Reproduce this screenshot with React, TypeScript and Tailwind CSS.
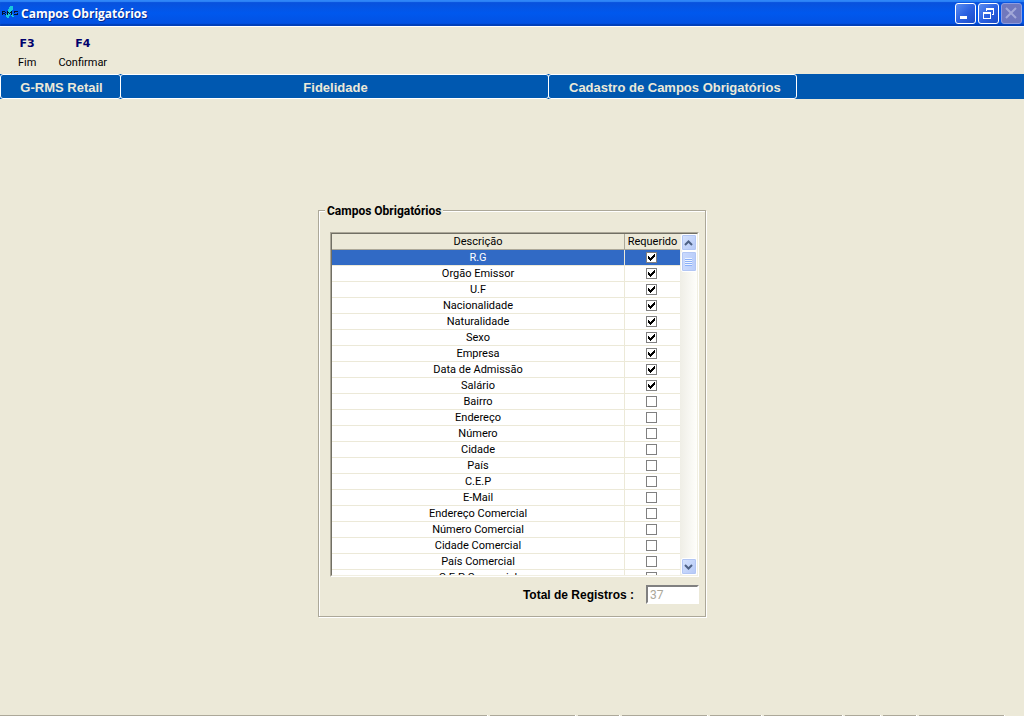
import { useState } from 'react';
import type { ReactNode } from 'react';
import clsx from 'clsx';

const initialFields = [
  { name: 'R.G', required: true },
  { name: 'Orgão Emissor', required: true },
  { name: 'U.F', required: true },
  { name: 'Nacionalidade', required: true },
  { name: 'Naturalidade', required: true },
  { name: 'Sexo', required: true },
  { name: 'Empresa', required: true },
  { name: 'Data de Admissão', required: true },
  { name: 'Salário', required: true },
  { name: 'Bairro', required: false },
  { name: 'Endereço', required: false },
  { name: 'Número', required: false },
  { name: 'Cidade', required: false },
  { name: 'País', required: false },
  { name: 'C.E.P', required: false },
  { name: 'E-Mail', required: false },
  { name: 'Endereço Comercial', required: false },
  { name: 'Número Comercial', required: false },
  { name: 'Cidade Comercial', required: false },
  { name: 'País Comercial', required: false },
  { name: 'C.E.P Comercial', required: false },
];

const statusPanels = [
  'flex-1',
  'w-[86px]',
  'w-[42px]',
  'w-[86px]',
  'w-[52px]',
  'w-[79px]',
  'w-9',
  'w-[34px]',
  'w-[86px]',
];

function AppLogo() {
  return (
    <svg width="16" height="16" viewBox="0 0 16 16" shapeRendering="crispEdges" aria-hidden="true">
      <path d="M8 1h3v4h-1v2H9v2H8v2H7v2H5v-1H4V9h1V7h1V4h1V2h1z" fill="#18c8dc" />
      <path d="M9 9h2v2h1v1h-2v-1H9z" fill="#18c8dc" />
      <path
        d="M0 6h3v1H1v1h2v1H1v1H0zM3 7h1v1H3zM3 9h1v1H3zM5 6h1v1h1v1h1V7h1V6h1v4H9V8H8v1H7V8H6v2H5zM12 6h4v1h-3v1h3v2h-4V9h3V8h-3z"
        fill="#04142c"
      />
    </svg>
  );
}

function WindowButton({
  label,
  disabled,
  children,
}: {
  label: string;
  disabled?: boolean;
  children: ReactNode;
}) {
  return (
    <button
      type="button"
      aria-label={label}
      disabled={disabled}
      className={clsx(
        'flex size-[21px] items-center justify-center rounded-[3px] border',
        disabled
          ? 'border-[#8f9de0] bg-[#7078bd]'
          : 'border-white bg-linear-to-br from-[#5b8cf0] via-[#2c62e2] to-[#1a4cc8]',
      )}
    >
      <svg width="19" height="19" viewBox="0 0 19 19" shapeRendering="crispEdges" aria-hidden="true">
        {children}
      </svg>
    </button>
  );
}

function TitleBar() {
  return (
    <header className="flex h-[26px] items-center justify-between bg-linear-to-b from-[#0a50d8] via-[#0058ee] via-50% to-[#0350e0] px-0.5 shadow-[inset_0_2px_1px_#2f86f8,inset_0_-2px_1px_#0240b8]">
      <div className="flex items-center gap-[3px]">
        <AppLogo />
        <h1 className="pt-px font-['Open_Sans',sans-serif] text-[12px] leading-4 font-bold text-white [text-shadow:1px_1px_#0a2a8a]">
          Campos Obrigatórios
        </h1>
      </div>
      <div className="flex gap-0.5">
        <WindowButton label="Minimizar">
          <path d="M4 12h7v3H4z" fill="#fff" />
        </WindowButton>
        <WindowButton label="Restaurar">
          <path d="M7 4h8v7h-2v-1h1V6H8v1H7z" fill="#fff" />
          <path d="M4 8h8v7H4zM5 10v4h6v-4z" fill="#fff" fillRule="evenodd" />
        </WindowButton>
        <WindowButton label="Fechar" disabled>
          <path d="M4 4l10 10M14 4L4 14" stroke="#a3a9d8" strokeWidth="2" shapeRendering="auto" />
        </WindowButton>
      </div>
    </header>
  );
}

function ToolButton({ hotkey, label }: { hotkey: string; label: string }) {
  return (
    <button type="button" className="flex flex-col items-center gap-[3px]">
      <span className="font-['DejaVu_Sans',sans-serif] text-[11px] leading-4 font-bold text-[#00006c]">{hotkey}</span>
      <span className="text-[11px] leading-4">{label}</span>
    </button>
  );
}

function Tab({ className, children }: { className: string; children: ReactNode }) {
  return (
    <div
      className={clsx(
        "flex h-[25px] items-center rounded-[3px] border border-white pt-0.5 font-['Liberation_Sans',sans-serif] text-[13px] font-bold text-[#ece9d8]",
        className,
      )}
    >
      {children}
    </div>
  );
}

function ScrollButton({ label, path }: { label: string; path: string }) {
  return (
    <button
      type="button"
      aria-label={label}
      className="flex h-[17px] w-4 items-center justify-center rounded-xs border border-white bg-linear-to-br from-[#d6e3fe] to-[#b4c8f6] shadow-[inset_0_0_0_1px_#b2c6f4]"
    >
      <svg width="9" height="6" viewBox="0 0 9 6" aria-hidden="true">
        <path d={path} fill="none" stroke="#4d6185" strokeWidth="2" />
      </svg>
    </button>
  );
}

function ScrollBar() {
  return (
    <div className="flex w-[17px] shrink-0 flex-col items-center justify-between bg-linear-to-r from-[#efeee6] to-[#fefefb]">
      <div className="flex flex-col">
        <ScrollButton label="Rolar para cima" path="M1 5l3.5-3.5L8 5" />
        <div className="flex h-[21px] w-4 flex-col items-center justify-center rounded-xs border border-white bg-linear-to-r from-[#cbdafd] to-[#b9cdfa] shadow-[inset_0_0_0_1px_#b2c6f4]">
          <span className="h-0.5 w-[7px] border-t border-[#eef4fe] bg-[#8cb0f8]" />
          <span className="h-0.5 w-[7px] border-t border-[#eef4fe] bg-[#8cb0f8]" />
          <span className="h-0.5 w-[7px] border-t border-[#eef4fe] bg-[#8cb0f8]" />
          <span className="h-0.5 w-[7px] border-t border-[#eef4fe] bg-[#8cb0f8]" />
        </div>
      </div>
      <ScrollButton label="Rolar para baixo" path="M1 1l3.5 3.5L8 1" />
    </div>
  );
}

export default function App() {
  const [fields, setFields] = useState(initialFields);
  const [selected, setSelected] = useState(0);

  const toggle = (index: number) => {
    setFields(fields.map((f, i) => (i === index ? { ...f, required: !f.required } : f)));
  };

  return (
    <div className="flex min-h-screen flex-col bg-[#ece9d8] font-[Roboto,sans-serif] text-[11px] text-black">
      <TitleBar />
      <div className="flex h-12 items-end gap-[22px] border-t border-white pb-[3px] pl-[18px]">
        <ToolButton hotkey="F3" label="Fim" />
        <ToolButton hotkey="F4" label="Confirmar" />
      </div>
      <nav className="flex bg-[#0058b0]">
        <Tab className="w-[121px] justify-center pl-0.5">G-RMS Retail</Tab>
        <Tab className="-ml-px w-[429px] justify-center pl-0.5">Fidelidade</Tab>
        <Tab className="-ml-px pr-[15px] pl-5">Cadastro de Campos Obrigatórios</Tab>
      </nav>

      <main className="flex flex-1 items-start justify-center pt-[103px]">
        <fieldset className="w-[388px] border border-[#aca899] pr-1.5 pb-3 pl-[11px] shadow-[inset_1px_1px_#fff,1px_1px_#fff]">
          <legend className="-ml-[5px] bg-[#ece9d8] px-0.5 pt-0.5 text-[12px] leading-[14px] font-bold">
            Campos Obrigatórios
          </legend>
          <div className="mt-3.5 border border-t-[#aca899] border-r-white border-b-white border-l-[#aca899]">
            <div className="flex h-[343px] border border-t-[#716f64] border-r-[#f1efe2] border-b-[#f1efe2] border-l-[#716f64] bg-white">
              <div className="flex-1 overflow-hidden">
                <table className="w-full table-fixed border-separate border-spacing-0 text-center leading-[14px]">
                  <thead>
                    <tr className="h-4 bg-[#ece9d8]">
                      <th className="border-r border-b border-[#aca899] p-0 pt-px font-normal">Descrição</th>
                      <th className="w-[55px] border-b border-[#aca899] p-0 pt-px font-normal">Requerido</th>
                    </tr>
                  </thead>
                  <tbody>
                    {fields.map((field, index) => (
                      <tr
                        key={field.name}
                        onClick={() => setSelected(index)}
                        className={clsx('h-4', index === selected && 'bg-[#316ac5] text-white')}
                      >
                        <td className="border-r border-b border-[#ece9d8] p-0 pt-px">{field.name}</td>
                        <td className="border-b border-[#ece9d8] p-0 pr-0.5">
                          <label className="grid h-[15px] place-items-center">
                            <input
                              type="checkbox"
                              aria-label={field.name}
                              checked={field.required}
                              onChange={() => toggle(index)}
                              className="col-start-1 row-start-1 size-[11px] appearance-none border border-[#808080] bg-white"
                            />
                            {field.required && (
                              <svg
                                width="7"
                                height="7"
                                viewBox="0 0 7 7"
                                shapeRendering="crispEdges"
                                className="pointer-events-none col-start-1 row-start-1"
                                aria-hidden="true"
                              >
                                <path d="M0 2h1v1h1v1h1V3h1V2h1V1h1V0h1v3H6v1H5v1H4v1H3v1H2V6H1V5H0z" fill="#000" />
                              </svg>
                            )}
                          </label>
                        </td>
                      </tr>
                    ))}
                  </tbody>
                </table>
              </div>
              <ScrollBar />
            </div>
          </div>
          <div className="mt-2 flex items-center justify-end gap-3">
            <label htmlFor="total" className="pt-px font-['Liberation_Sans',sans-serif] text-[12px] leading-4 font-bold">
              Total de Registros :
            </label>
            <input
              id="total"
              disabled
              defaultValue="37"
              className="h-[19px] w-[53px] border-2 border-t-[#808080] border-r-white border-b-white border-l-[#808080] bg-white px-0.5 text-[12px] text-[#aca899]"
            />
          </div>
        </fieldset>
      </main>

      <footer className="flex h-px gap-0.5 pr-[19px]">
        {statusPanels.map((width, index) => (
          <div key={index} className={clsx('border-r border-white bg-[#aca899]', width)} />
        ))}
      </footer>
    </div>
  );
}
